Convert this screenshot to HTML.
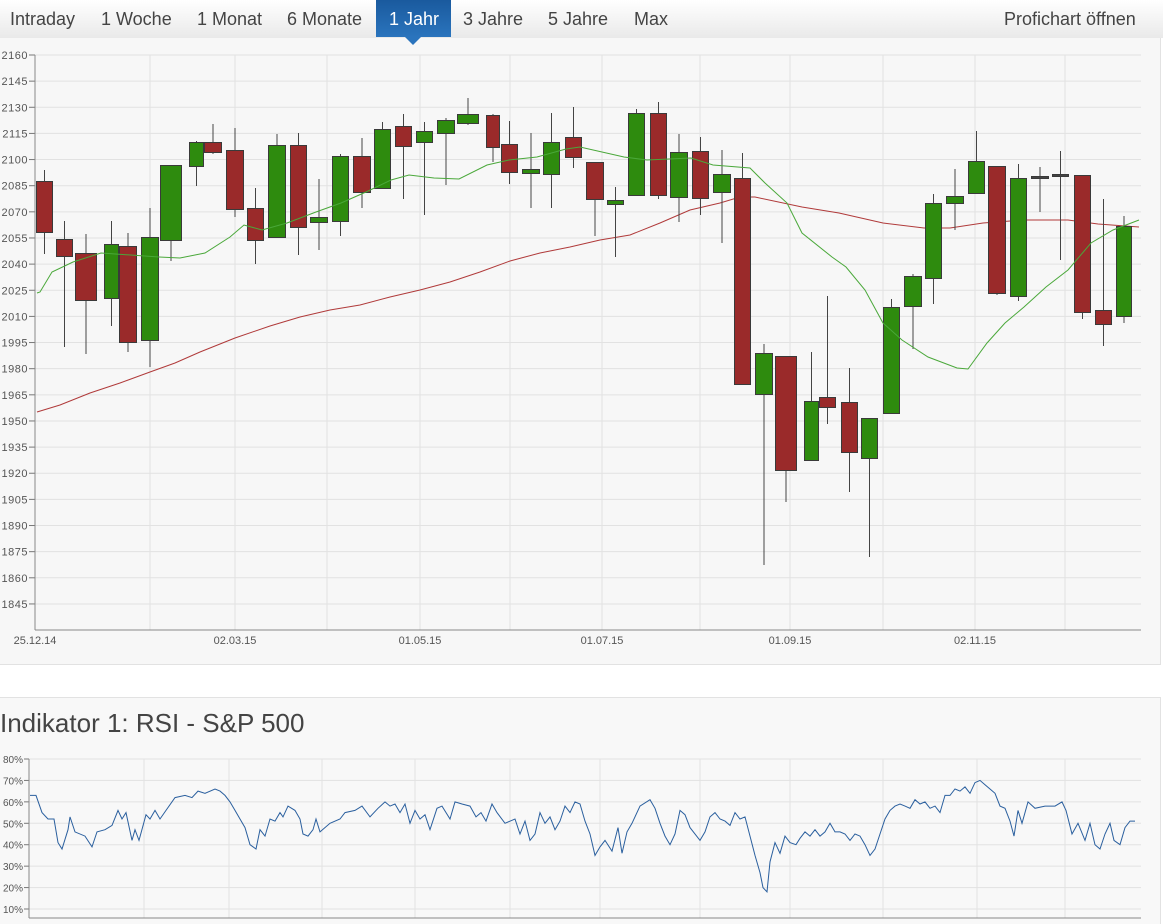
<!DOCTYPE html>
<html><head><meta charset="utf-8"><style>
*{margin:0;padding:0;box-sizing:border-box}
body{width:1163px;height:924px;background:#fff;font-family:"Liberation Sans",Arial,sans-serif;position:relative;overflow:hidden}
.nav{position:absolute;left:0;top:0;width:1163px;height:38px;background:linear-gradient(#ffffff,#e9e9e9)}
.nav span{position:absolute;top:9px;font-size:18px;color:#444}
.act{position:absolute;left:376px;top:0;width:75px;height:37px;background:linear-gradient(#1a5a9e,#2a74bd)}
.arr{position:absolute;left:405px;top:37px;width:0;height:0;border-left:8px solid transparent;border-right:8px solid transparent;border-top:8px solid #2a74bd;z-index:5}
.p1{position:absolute;left:0;top:38px;width:1161px;height:627px;background:#f7f7f7;border-bottom:1px solid #e2e2e2;border-right:1px solid #e2e2e2}
.p2{position:absolute;left:0;top:697px;width:1161px;height:227px;background:#f8f8f8;border-top:1px solid #e2e2e2;border-right:1px solid #e2e2e2}
.title{position:absolute;left:0;top:708px;font-size:26px;color:#444}
svg{position:absolute;left:0;top:0}
</style></head><body>
<div class="p1"></div>
<div class="p2"></div>
<div class="nav">
<div class="act"></div>
<span style="left:10px">Intraday</span>
<span style="left:101px">1 Woche</span>
<span style="left:197px">1 Monat</span>
<span style="left:287px">6 Monate</span>
<span style="left:389px;color:#fff">1 Jahr</span>
<span style="left:463px">3 Jahre</span>
<span style="left:548px">5 Jahre</span>
<span style="left:634px">Max</span>
<span style="left:1004px">Profichart öffnen</span>
</div>
<div class="arr"></div>
<div class="title">Indikator 1: RSI - S&amp;P 500</div>
<svg id="s" width="1163" height="924" xmlns="http://www.w3.org/2000/svg"></svg>
<script>
var s=document.getElementById('s'),h='';
var labs=[2160,2145,2130,2115,2100,2085,2070,2055,2040,2025,2010,1995,1980,1965,1950,1935,1920,1905,1890,1875,1860,1845];
labs.forEach(function(v,i){var y=55+i*26.14;h+='<line x1="35" x2="1141" y1="'+y+'" y2="'+y+'" stroke="#e2e2e2"/>';h+='<line x1="29" x2="35" y1="'+y+'" y2="'+y+'" stroke="#777"/>';h+='<text x="28" y="'+(y+4)+'" font-size="11" fill="#555" text-anchor="end" letter-spacing="0.5">'+v+'</text>';});
[150,235,327,420,510,602,700,790,883,975,1065].forEach(function(x){h+='<line x1="'+x+'" x2="'+x+'" y1="55" y2="630" stroke="#e2e2e2"/>';});
h+='<line x1="35" x2="35" y1="55" y2="630" stroke="#888"/><line x1="35" x2="1141" y1="630" y2="630" stroke="#888"/>';
[[35,'25.12.14'],[235,'02.03.15'],[420,'01.05.15'],[602,'01.07.15'],[790,'01.09.15'],[975,'02.11.15']].forEach(function(a){h+='<text x="'+a[0]+'" y="644" font-size="11" fill="#555" text-anchor="middle">'+a[1]+'</text>';});
var red=[[37,412],[60,405],[90,393],[120,383],[150,372],[175,363],[200,352],[235,338],[270,326],[300,317],[330,310],[360,305],[390,297],[420,290],[450,282],[480,272],[510,261],[540,253],[570,247],[600,240],[630,235],[660,223],[690,210],[720,203],[740,197],[755,197],[802,207],[839,213],[883,223],[924,228],[950,228],[983,223],[1024,220],[1068,220],[1098,224],[1139,227]];
var grn=[[37,293],[40,292],[52,272],[73,262],[101,253],[159,257],[180,258],[205,253],[230,237],[244,225],[262,230],[287,223],[316,212],[341,203],[366,192],[391,180],[409,175],[434,178],[459,179],[487,165],[509,160],[537,157],[566,149],[580,147],[624,157],[647,160],[691,158],[713,165],[750,168],[765,183],[787,203],[802,233],[832,257],[846,267],[865,290],[883,323],[902,340],[928,357],[957,368],[968,369],[987,343],[1005,323],[1024,307],[1046,287],[1068,270],[1091,243],[1113,230],[1139,220]];
function pl(p,c){return '<polyline fill="none" stroke="'+c+'" stroke-width="1" points="'+p.map(function(q){return q.join(',')}).join(' ')+'"/>';}
var C=[[36,53,181,232,170,254,'r'],[56,73,239,256,221,347,'r'],[75,97,253,300,234,354,'r'],[104,119,244,298,221,326,'g'],[119,137,246,342,233,352,'r'],[141,159,237,340,208,367,'g'],[160,182,165,240,165,261,'g'],[189,204,142,166,141,186,'g'],[204,222,142,152,124,154,'r'],[226,244,150,209,128,217,'r'],[247,264,208,240,188,264,'r'],[268,286,145,237,134,237,'g'],[290,307,145,227,133,255,'r'],[310,328,217,222,179,250,'g'],[332,349,156,221,154,236,'g'],[353,371,156,192,138,208,'r'],[374,391,129,188,122,188,'g'],[395,412,126,146,114,199,'r'],[416,433,131,142,122,215,'g'],[437,455,120,133,118,185,'g'],[457,479,114,123,98,125,'g'],[486,500,115,147,114,162,'r'],[501,518,144,172,121,184,'r'],[522,540,169,173,133,208,'g'],[543,560,142,174,113,208,'g'],[565,582,137,157,107,168,'r'],[586,604,162,199,162,236,'r'],[607,624,200,204,187,257,'g'],[628,645,113,195,109,195,'g'],[650,667,113,195,102,199,'r'],[670,688,152,197,134,222,'g'],[692,709,151,198,137,215,'r'],[713,731,174,192,150,243,'g'],[734,751,178,384,153,384,'r'],[755,773,353,394,344,565,'g'],[775,797,356,470,356,502,'r'],[804,819,401,460,352,460,'g'],[819,836,397,407,296,424,'r'],[841,858,402,452,368,492,'r'],[861,878,418,458,418,557,'g'],[883,900,307,413,299,413,'g'],[904,922,276,306,274,349,'g'],[925,942,203,278,194,304,'g'],[946,964,196,203,169,230,'g'],[968,985,161,193,131,193,'g'],[988,1006,166,293,166,295,'r'],[1010,1027,178,296,164,301,'g'],[1031,1049,176,178,167,212,'d'],[1052,1069,174,176,151,260,'d'],[1074,1091,175,312,175,319,'r'],[1095,1112,310,324,199,346,'r'],[1116,1132,226,316,216,323,'g']];
var cand='';
C.forEach(function(c){var xm=(c[0]+c[1])/2;cand+='<line x1="'+xm+'" x2="'+xm+'" y1="'+c[4]+'" y2="'+c[5]+'" stroke="#444"/>';var f=c[6]=='r'?'#9a2a2a':c[6]=='g'?'#2e8b0e':'#444';cand+='<rect x="'+(c[0]+.5)+'" y="'+(c[2]+.5)+'" width="'+(c[1]-c[0]-1)+'" height="'+Math.max(c[3]-c[2],2)+'" fill="'+f+'" stroke="#3a3a3a" stroke-width="1"/>';});
h+=pl(red,'#b03a3a')+cand+pl(grn,'#4aa83a');
[80,70,60,50,40,30,20,10].forEach(function(v){var y=759+(80-v)*2.143;h+='<line x1="29" x2="1141" y1="'+y+'" y2="'+y+'" stroke="#e2e2e2"/><line x1="24" x2="29" y1="'+y+'" y2="'+y+'" stroke="#777"/><text x="23" y="'+(y+4)+'" font-size="10" fill="#555" text-anchor="end">'+v+'%</text>';});
[144,229,322,415,510,600,700,790,883,977,1065].forEach(function(x){h+='<line x1="'+x+'" x2="'+x+'" y1="759" y2="918" stroke="#e2e2e2"/>';});
h+='<line x1="29" x2="29" y1="759" y2="918" stroke="#888"/><line x1="29" x2="1141" y1="918" y2="918" stroke="#888"/>';
var R=[[30,63],[36,63],[42,55],[48,52],[54,52],[58,41],[62,38],[68,47],[70,53],[75,46],[85,44],[92,39],[97,46],[105,47],[112,49],[118,56],[122,52],[126,55],[132,42],[135,47],[139,42],[146,54],[150,52],[155,56],[160,52],[166,56],[175,62],[185,63],[192,62],[198,65],[205,64],[215,66],[220,65],[225,63],[230,60],[235,56],[240,52],[245,48],[250,40],[256,38],[260,47],[265,44],[270,52],[275,51],[280,55],[283,53],[288,58],[295,56],[300,52],[303,45],[308,44],[313,47],[316,52],[320,46],[330,50],[340,52],[345,55],[355,56],[362,58],[370,53],[378,57],[385,60],[390,58],[395,59],[400,55],[405,59],[410,50],[415,56],[420,52],[425,54],[430,47],[437,57],[442,58],[450,52],[455,60],[462,59],[470,58],[476,53],[481,55],[486,51],[492,59],[497,55],[505,50],[515,52],[520,45],[525,51],[530,42],[535,45],[540,55],[545,50],[550,53],[555,47],[560,51],[565,58],[570,55],[575,60],[580,59],[585,51],[590,45],[595,35],[600,39],[605,42],[612,37],[618,48],[622,36],[627,46],[632,50],[640,58],[650,61],[655,57],[660,50],[665,44],[670,40],[675,45],[680,56],[685,54],[690,48],[700,42],[705,46],[710,53],[715,55],[720,52],[725,51],[730,49],[735,55],[740,52],[745,53],[750,44],[755,35],[760,27],[763,20],[767,18],[770,32],[775,41],[780,36],[785,44],[790,41],[796,40],[800,43],[805,46],[810,44],[815,47],[820,44],[825,46],[830,50],[835,46],[840,46],[845,45],[850,42],[855,45],[860,44],[865,40],[870,35],[875,38],[880,45],[885,52],[890,56],[895,58],[900,59],[905,58],[910,57],[915,61],[920,59],[925,60],[930,57],[935,58],[940,55],[945,63],[950,63],[955,66],[960,65],[965,67],[970,64],[975,69],[980,70],[985,68],[990,66],[995,64],[1000,58],[1005,57],[1010,51],[1014,44],[1018,56],[1022,50],[1028,60],[1035,57],[1045,58],[1055,58],[1062,60],[1066,56],[1072,45],[1078,50],[1085,42],[1090,50],[1095,40],[1100,38],[1105,45],[1110,50],[1114,42],[1120,40],[1125,48],[1130,51],[1135,51]];
h+=pl(R.map(function(p){return [p[0],(759+(80-p[1])*2.143).toFixed(1)]}),'#2a5f9e');
s.innerHTML=h;
</script>
</body></html>
